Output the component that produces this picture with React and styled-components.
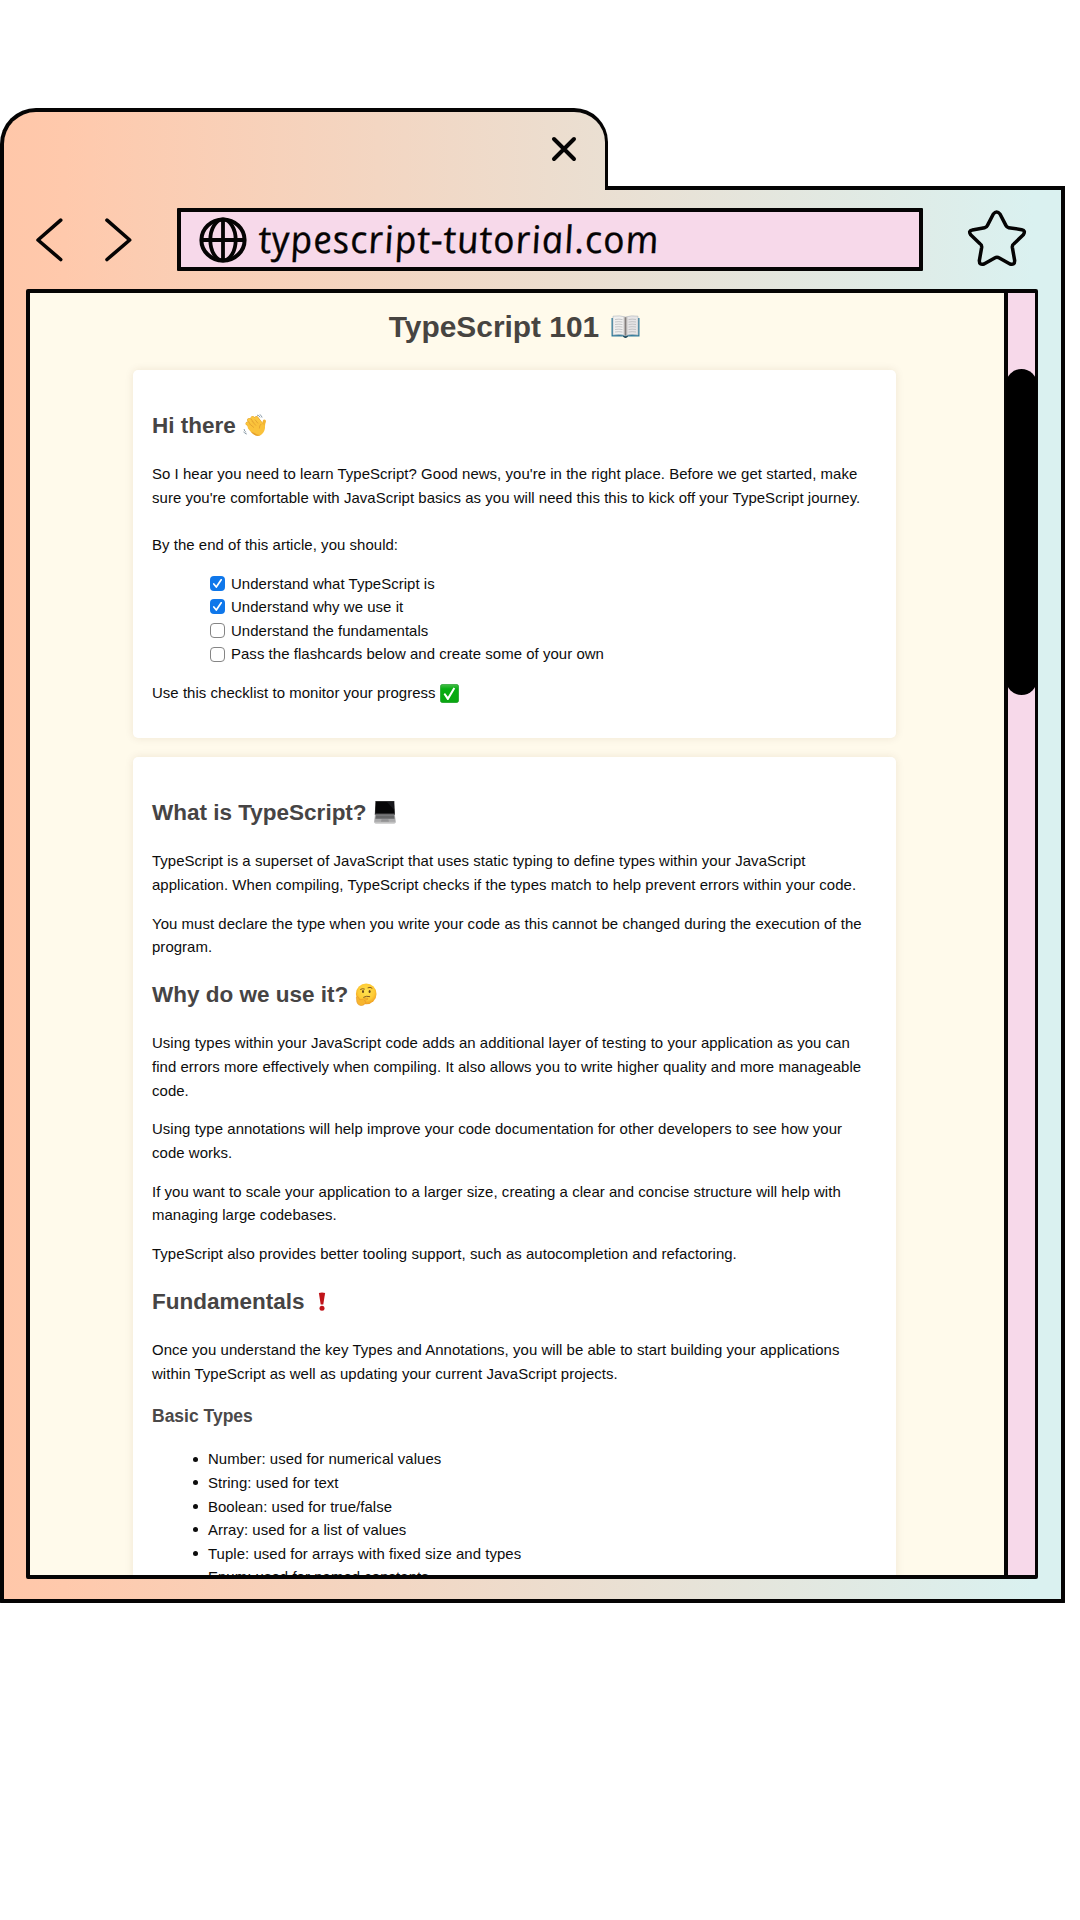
import React from "react";
import styled, { createGlobalStyle, css } from "styled-components";

const ink = "#050404";
const pink = "#f7d9ea";
const sans = `"Liberation Sans", Arial, Helvetica, sans-serif`;

const GlobalStyle = createGlobalStyle`
  *, *::before, *::after { box-sizing: border-box; }
  body { margin: 0; background: #fff; font-family: ${sans}; }
`;

const frameGradient = css`
  background-color: #ecdccc;
  background-image: linear-gradient(90deg, #ffc7a9 0%, #ffc9ac 6%, #daf1f0 97%, #daf1f0 100%);
  background-origin: border-box;
  background-size: 1065px 100%;
  background-repeat: no-repeat;
`;

const bodyText = css`
  font-size: 14.95px;
  line-height: 23.57px;
  letter-spacing: 0.05px;
  color: #0d0d0d;
`;

const Screen = styled.div`
  width: 1080px;
  height: 1920px;
  padding-top: 108px;
  background: #fff;
  overflow: hidden;
`;

const BrowserWindow = styled.div`
  display: flex;
  flex-direction: column;
  width: 1065px;
  height: 1495px;
`;

const TabRow = styled.div`
  display: flex;
  height: 82px;
`;

const Tab = styled.div`
  ${frameGradient}
  display: flex;
  justify-content: flex-end;
  align-items: flex-start;
  width: 608px;
  padding: 24px 28px 0 0;
  border: 4px solid ${ink};
  border-width: 4px 3px 0 4px;
  border-radius: 36px 34px 0 0;
`;

const Shoulder = styled.div`
  flex: 1;
  border-bottom: 4px solid ${ink};
`;

const Body = styled.div`
  ${frameGradient}
  flex: 1;
  display: flex;
  flex-direction: column;
  min-height: 0;
  padding-bottom: 20px;
  border: 4px solid ${ink};
  border-top: 0;
  border-radius: 0 0 1px 1px;
`;

const Toolbar = styled.div`
  display: flex;
  align-items: center;
  height: 99px;
  padding-left: 31px;
`;

const NavButtons = styled.div`
  display: flex;
  gap: 41px;
  margin-right: 45px;
`;

const Icon = styled.svg`
  display: block;
  fill: none;
  stroke: ${ink};
  stroke-linecap: round;
  stroke-linejoin: round;
`;

const AddressBar = styled.div`
  display: flex;
  align-items: center;
  gap: 11px;
  width: 746px;
  height: 63px;
  margin-right: 43.5px;
  padding-left: 18px;
  background: ${pink};
  border: 4px solid ${ink};
  border-radius: 1px;
`;

const Address = styled.span`
  padding-bottom: 3px;
  font: italic 500 38px/46px "Open Sans", "Noto Sans", sans-serif;
  letter-spacing: 0.87px;
  white-space: nowrap;
  color: ${ink};
  -webkit-text-stroke: 0.3px ${ink};
  transform: skewX(9deg);
`;

const StarSlot = styled.div`
  padding-bottom: 3px;
`;

const Viewport = styled.div`
  display: flex;
  height: 1290px;
  margin: 0 23px 0 22px;
  border: 4px solid ${ink};
  border-right-width: 3px;
  border-radius: 2px;
`;

const Page = styled.main`
  flex: 1;
  overflow: hidden;
  padding: 10px 108px 0 103px;
  background: #fffaeb;
`;

const ScrollTrack = styled.div`
  width: 31px;
  padding-top: 76px;
  background: ${pink};
  border-left: 4px solid ${ink};
`;

const ScrollThumb = styled.div`
  width: 31px;
  height: 326px;
  margin-left: -2px;
  border-radius: 16px;
  background: #000;
`;

const Title = styled.h1`
  display: flex;
  justify-content: center;
  align-items: center;
  gap: 12px;
  margin: 0 0 20px;
  font-size: 29.9px;
  line-height: 47px;
  color: #474441;
`;

const Card = styled.section`
  margin-bottom: 19px;
  padding: 19.6px 19px 18.5px;
  background: #fff;
  border-radius: 5px;
  box-shadow: 0 0 8px rgba(90, 50, 20, 0.1);
`;

const Heading = styled.h2`
  display: flex;
  align-items: center;
  gap: ${(p) => p.$gap || 7}px;
  margin: 18.4px 0 18.9px;
  font-size: 22.5px;
  line-height: 35.3px;
  color: #464444;
`;

const SubHeading = styled.h3`
  margin: 17.6px 0 17px;
  font-size: 17.5px;
  line-height: 27.6px;
  color: #4b4949;
`;

const Text = styled.p`
  ${bodyText}
  margin: 15.2px 0;
`;

const Checklist = styled.ul`
  margin: 15.2px 0;
  padding: 0 0 0 58px;
  list-style: none;
`;

const CheckItem = styled.li`
  ${bodyText}
  display: flex;
  align-items: center;
  gap: 6px;
`;

const Box = styled.span`
  display: grid;
  place-items: center;
  width: 15px;
  height: 15px;
  border-radius: 4px;
  background: ${(p) => (p.$on ? "#0f77ea" : "#fff")};
  border: ${(p) => (p.$on ? "0" : "1px solid #858585")};
`;

const Bullets = styled.ul`
  margin: 15px 0;
  padding: 0 0 0 40.5px;
  list-style: none;
`;

const BulletItem = styled.li`
  ${bodyText}
  display: flex;
  align-items: center;
  gap: 10.5px;

  &::before {
    content: "";
    width: 5px;
    height: 5px;
    border-radius: 50%;
    background: #0d0d0d;
  }
`;

const Picture = styled.svg`
  display: inline-block;
  flex: none;
  vertical-align: ${(p) => p.$drop || 0}px;
`;

const Tick = () => (
  <svg width="11" height="11" viewBox="0 0 11 11" fill="none" stroke="#fff" strokeWidth="1.7" strokeLinecap="round" strokeLinejoin="round">
    <path d="M1.8 6 L4.3 9 L9.2 1.8" />
  </svg>
);

const Book = () => (
  <Picture width="29" height="23" viewBox="0 0 29 23">
    <path d="M.5 3H28.5V21.5H17L14.5 23L12 21.5H.5Z" fill="#337c9c" />
    <path d="M2 1.2Q9 .2 14.5 2V20.5Q9 18.8 2 20Z" fill="#f1f0ef" stroke="#aeb6bc" strokeWidth=".6" />
    <path d="M27 1.2Q20 .2 14.5 2V20.5Q20 18.8 27 20Z" fill="#e7e5e6" stroke="#aeb6bc" strokeWidth=".6" />
    <path d="M12.7 1.8L14.5 2.5L16.3 1.8V20L14.5 20.8L12.7 20Z" fill="#b5b2b1" />
    <path d="M14.5 2.3V20.5" stroke="#77706d" strokeWidth=".8" />
    <path d="M4 4.5Q8 3.7 11.5 4.6M4 7Q8 6.2 11.5 7.1M4 9.5Q8 8.7 11.5 9.6M4 12Q8 11.2 11.5 12.1M4 14.5Q8 13.7 11.5 14.6M4 17Q8 16.2 11.5 17.1M17.5 4.6Q21 3.7 25 4.5M17.5 7.1Q21 6.2 25 7M17.5 9.6Q21 8.7 25 9.5M17.5 12.1Q21 11.2 25 12M17.5 14.6Q21 13.7 25 14.5M17.5 17.1Q21 16.2 25 17" fill="none" stroke="#b9babc" strokeWidth=".8" />
    <path d="M12.3 20.8Q14.5 22 16.7 20.8V22L14.5 23L12.3 22Z" fill="#24424f" />
  </Picture>
);

const Wave = () => (
  <Picture width="24" height="23" viewBox="0 0 24 23">
    <g fill="none" strokeLinecap="round">
      <g stroke="#e3a32c" strokeWidth="4">
        <path d="M4.6 9.6L12 16M6.2 6L14 14M9.6 4L16 12" />
        <path d="M13.4 4.1L18 10" />
      </g>
      <g stroke="#fbc63f" strokeWidth="3.1">
        <path d="M4.6 9.6L12 16M6.2 6L14 14M9.6 4L16 12M13.4 4.1L18 10" />
      </g>
      <path d="M21.4 7.2Q20.2 9.6 20.4 13" stroke="#f3b533" strokeWidth="3.2" />
    </g>
    <path d="M4 10L16.2 7.6Q19 10 21.9 11.6C22.5 16 20 20.5 16.2 21.8C12.6 22.7 9 19.6 5 14.5Z" fill="#fac23b" />
    <path d="M7.5 17.5Q12.5 23.7 17.5 21Q14 21.3 11.5 19Z" fill="#e49e2b" />
    <path d="M16.4 14.5Q16.2 11.5 18.2 10M6 9.4L11 13.6M8.6 6.8L13 11.6M12 5.6L15 9.4" fill="none" stroke="#dc982d" strokeWidth=".7" />
    <path d="M14.4 1.1Q16.2 1.2 17 3M17 .6Q18.7 1.4 19 3.2M1.1 15.4Q1.2 17.2 2.8 18.2M.7 18Q1.6 19.7 3.4 20" fill="none" stroke="#758896" strokeWidth=".8" strokeLinecap="round" />
  </Picture>
);

const GreenCheck = () => (
  <Picture width="19" height="19" viewBox="0 0 19 19" $drop={-5}>
    <defs>
      <linearGradient id="green" x2="0" y2="1">
        <stop stopColor="#48bd4b" />
        <stop offset=".25" stopColor="#07ad12" />
        <stop offset="1" stopColor="#0aa611" />
      </linearGradient>
    </defs>
    <rect x=".3" y=".3" width="18.4" height="18.4" rx="2.6" fill="url(#green)" stroke="#169822" strokeWidth=".6" />
    <path d="M3.6 10.3L5 9.1L7.9 12.8L13.5 3.6L15.2 4.5L8.4 15.9H7.3Z" fill="#fff" />
  </Picture>
);

const Laptop = () => (
  <Picture width="22" height="23" viewBox="0 0 22 23">
    <path d="M1.4 0H20.3L21 14H.8Z" fill="#2b2b2c" />
    <path d="M2 1H19.8L20.2 12H1.7Z" fill="#060607" />
    <path d="M13 1H19.8L20.1 9Z" fill="#17181b" />
    <path d="M1 13.5H20.8L21.7 20.8Q21.7 22.6 20.3 22.6H1.6Q.2 22.6 .2 20.8Z" fill="#a9a9aa" />
    <path d="M2 14.2H20L20.5 17.7H1.4Z" fill="#666768" />
    <path d="M7.5 18.3H14.4L15 21H7Z" fill="#929293" />
    <path d="M.3 21.3H21.6" stroke="#d0d0d0" strokeWidth=".8" />
  </Picture>
);

const Thinking = () => (
  <Picture width="22" height="23" viewBox="0 0 22 23">
    <defs>
      <radialGradient id="face" cx=".5" cy=".4" r=".6">
        <stop stopColor="#ffe34f" />
        <stop offset=".65" stopColor="#fecb35" />
        <stop offset="1" stopColor="#ef9d24" />
      </radialGradient>
    </defs>
    <circle cx="11.2" cy="10.9" r="10.3" fill="url(#face)" />
    <ellipse cx="8" cy="8.4" rx="1" ry="1.5" fill="#60401b" />
    <ellipse cx="14.6" cy="8.4" rx="1" ry="1.5" fill="#60401b" />
    <path d="M5.6 6.3Q7.5 5.1 9.4 6M13 4.7Q15.2 3.6 17 5.1M8.7 14.2Q11.5 12.6 14.7 13.6" fill="none" stroke="#70491d" strokeWidth=".9" strokeLinecap="round" />
    <path d="M1.3 14.5Q2.7 12.5 3.8 15L4.8 16.8L11.7 15Q13.7 14.9 12.8 16.4L9.2 17.7Q11.3 18 10.6 19.8Q9.5 22.4 6.3 22.7Q2.6 22.4 1.8 19Z" fill="#f7b52e" stroke="#e0932a" strokeWidth=".5" />
  </Picture>
);

const Exclamation = () => (
  <Picture width="8" height="19" viewBox="0 0 8 19">
    <path d="M.9 1Q4 -.1 7.1 1L5.3 12.4H2.7Z" fill="#c0141a" />
    <circle cx="4" cy="16.2" r="2.5" fill="#c0141a" />
  </Picture>
);

const tasks = [
  ["Understand what TypeScript is", true],
  ["Understand why we use it", true],
  ["Understand the fundamentals", false],
  ["Pass the flashcards below and create some of your own", false],
];

const types = [
  "Number: used for numerical values",
  "String: used for text",
  "Boolean: used for true/false",
  "Array: used for a list of values",
  "Tuple: used for arrays with fixed size and types",
  "Enum: used for named constants",
];

export default function App() {
  return (
    <Screen>
      <GlobalStyle />
      <BrowserWindow>
        <TabRow>
          <Tab>
            <Icon width="26" height="26" viewBox="0 0 26 26" strokeWidth="4">
              <path d="M3 3L23 23M23 3L3 23" />
            </Icon>
          </Tab>
          <Shoulder />
        </TabRow>
        <Body>
          <Toolbar>
            <NavButtons>
              <Icon width="28" height="44" viewBox="0 0 28 44" strokeWidth="3.6">
                <path d="M25.7 2.2L3 22L25.7 41.5" />
              </Icon>
              <Icon width="28" height="44" viewBox="0 0 28 44" strokeWidth="3.6">
                <path d="M3 2.2L25.7 22L3 41.5" />
              </Icon>
            </NavButtons>
            <AddressBar>
              <Icon width="48" height="46" viewBox="0 0 48 46" strokeWidth="4">
                <ellipse cx="24" cy="23" rx="21.6" ry="20.6" />
                <ellipse cx="24" cy="23" rx="12.7" ry="20.6" strokeWidth="3.8" />
                <path d="M24 3V43M3 23H45" strokeWidth="3.8" />
              </Icon>
              <Address>typescript-tutorial.com</Address>
            </AddressBar>
            <StarSlot>
              <Icon width="60" height="58" viewBox="500 118 180 174" strokeWidth="10.5">
                <path d="M579 133Q589 121 599 133L617 168Q619 173 625 174L664 180Q677 183 669 195L641 222Q635 226 636 233L643 273Q643 287 629 283L597 265Q590 261 583 265L551 283Q537 287 537 273L544 233Q545 226 539 222L511 195Q503 183 516 181L553 174Q559 173 561 168Z" />
              </Icon>
            </StarSlot>
          </Toolbar>
          <Viewport>
            <Page>
              <Title>TypeScript 101 <Book /></Title>
              <Card>
                <Heading>Hi there <Wave /></Heading>
                <Text>
                  So I hear you need to learn TypeScript? Good news, you're in the right place. Before we get started, make
                  sure you're comfortable with JavaScript basics as you will need this this to kick off your TypeScript journey.
                  <br />
                  <br />
                  By the end of this article, you should:
                </Text>
                <Checklist>
                  {tasks.map(([label, done]) => (
                    <CheckItem key={label}>
                      <Box $on={done}>{done && <Tick />}</Box>
                      {label}
                    </CheckItem>
                  ))}
                </Checklist>
                <Text>Use this checklist to monitor your progress <GreenCheck /></Text>
              </Card>
              <Card>
                <Heading>What is TypeScript? <Laptop /></Heading>
                <Text>
                  TypeScript is a superset of JavaScript that uses static typing to define types within your JavaScript
                  application. When compiling, TypeScript checks if the types match to help prevent errors within your code.
                </Text>
                <Text>
                  You must declare the type when you write your code as this cannot be changed during the execution of the
                  program.
                </Text>
                <Heading>Why do we use it? <Thinking /></Heading>
                <Text>
                  Using types within your JavaScript code adds an additional layer of testing to your application as you can
                  find errors more effectively when compiling. It also allows you to write higher quality and more manageable
                  code.
                </Text>
                <Text>
                  Using type annotations will help improve your code documentation for other developers to see how your
                  code works.
                </Text>
                <Text>
                  If you want to scale your application to a larger size, creating a clear and concise structure will help with
                  managing large codebases.
                </Text>
                <Text>TypeScript also provides better tooling support, such as autocompletion and refactoring.</Text>
                <Heading $gap={13}>Fundamentals <Exclamation /></Heading>
                <Text>
                  Once you understand the key Types and Annotations, you will be able to start building your applications
                  within TypeScript as well as updating your current JavaScript projects.
                </Text>
                <SubHeading>Basic Types</SubHeading>
                <Bullets>
                  {types.map((t) => (
                    <BulletItem key={t}>{t}</BulletItem>
                  ))}
                </Bullets>
              </Card>
            </Page>
            <ScrollTrack>
              <ScrollThumb />
            </ScrollTrack>
          </Viewport>
        </Body>
      </BrowserWindow>
    </Screen>
  );
}
